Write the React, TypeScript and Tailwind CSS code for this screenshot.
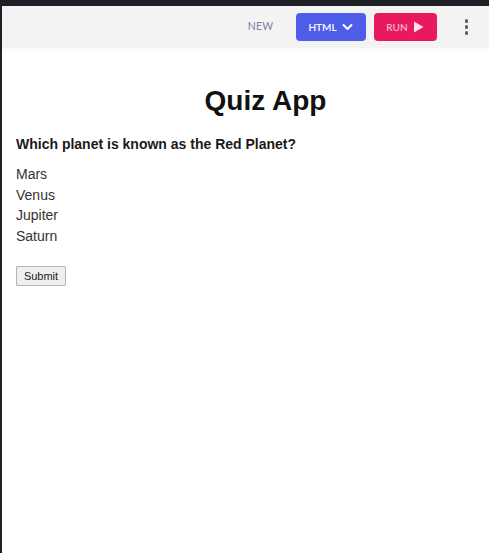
import React from "react";

export default function App() {
  const options = ["Mars", "Venus", "Jupiter", "Saturn"];
  return (
    <div className="w-[489px] h-[553px] bg-[#1d2025] pt-[6px] pl-[2px] overflow-hidden">
      <div className="h-full bg-white flex flex-col">
        <div className="h-[42px] bg-[#f3f3f3] flex items-center justify-end shadow-[0_2px_4px_rgba(0,0,0,0.04)] relative z-10 font-['Lato',sans-serif]">
          <span className="text-[10.5px] text-[#7d82a3] tracking-[0.3px] mr-[22px]">NEW</span>
          <button className="w-[70px] h-[28px] rounded-[4px] bg-[#4f5ee9] text-white flex items-center justify-center gap-[5px] text-[10px] font-semibold mr-[8px]">
            <span>HTML</span>
            <svg width="11" height="8" viewBox="0 0 11 8" fill="none">
              <path d="M1.5 2 L5.5 6 L9.5 2" stroke="white" strokeWidth="2" strokeLinecap="round" strokeLinejoin="round" />
            </svg>
          </button>
          <button className="w-[63px] h-[28px] rounded-[4px] bg-[#e8195d] text-[#f7b3c8] flex items-center justify-center gap-[5px] text-[10px] font-semibold mr-[28px]">
            <span>RUN</span>
            <svg width="11" height="12" viewBox="0 0 11 12">
              <path d="M1 0.5 L10.5 6 L1 11.5 Z" fill="#fbe3ea" />
            </svg>
          </button>
          <div className="flex flex-col gap-[2.5px] mr-[21px]">
            <span className="w-[3.5px] h-[3.5px] rounded-full bg-[#5b5b5b]" />
            <span className="w-[3.5px] h-[3.5px] rounded-full bg-[#5b5b5b]" />
            <span className="w-[3.5px] h-[3.5px] rounded-full bg-[#5b5b5b]" />
          </div>
        </div>
        <div className="px-[14px] font-['Liberation_Sans',Arial,sans-serif]">
          <h1 className="text-[28px] font-bold text-[#111] text-center pl-[40px] leading-[32px] mt-[37px]">Quiz App</h1>
          <p className="text-[14px] font-bold text-[#1a1a1a] mt-[18px] leading-[18px]">Which planet is known as the Red Planet?</p>
          <div className="mt-[11px] text-[14px] text-[#333] leading-[20.5px]">
            {options.map((o) => (
              <div key={o}>{o}</div>
            ))}
          </div>
          <button className="mt-[20px] h-[20px] w-[50px] border border-[#b5b5b5] bg-[#efefef] text-[11px] text-[#222] leading-none rounded-[1px]">
            Submit
          </button>
        </div>
      </div>
    </div>
  );
}
